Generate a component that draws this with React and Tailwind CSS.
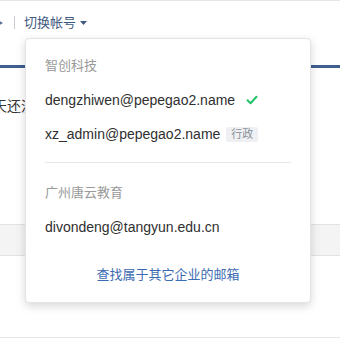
const FONT = '"Liberation Sans", "Noto Sans CJK SC", sans-serif'

const GROUPS = [
  {
    name: '智创科技',
    accounts: [
      { email: 'dengzhiwen@pepegao2.name', current: true },
      { email: 'xz_admin@pepegao2.name', tag: '行政' },
    ],
  },
  {
    name: '广州唐云教育',
    accounts: [{ email: 'divondeng@tangyun.edu.cn' }],
  },
]

function Check() {
  return (
    <svg width="12" height="10" viewBox="0 0 12 10" className="shrink-0">
      <path d="M1.5 5.2 L4.6 8.2 L10.5 1.8" fill="none" stroke="#22c36b" strokeWidth="2" strokeLinecap="round" strokeLinejoin="round" />
    </svg>
  )
}

export default function App() {
  return (
    <div className="relative w-[340px] h-[340px] overflow-hidden bg-white" style={{ fontFamily: FONT }}>
      <div className="border-t border-[#e6e6e6] h-[44px] flex items-center">
        <svg width="8" height="8" viewBox="0 0 8 8" className="shrink-0 ml-[-4px]">
          <path d="M2 1 L7 4 L2 7 Z" fill="#5c7193" />
        </svg>
        <span className="shrink-0 ml-[10px] w-[1px] h-[13px] bg-[#c8ccd3]" />
        <span className="shrink-0 ml-[9px] text-[#3f5a80] text-[13px] flex items-center gap-[4px]">
          切换帐号
          <svg width="7" height="4" viewBox="0 0 7 4">
            <path d="M0 0 H7 L3.5 4 Z" fill="#3f5a80" />
          </svg>
        </span>
      </div>

      <div className="mt-[21px] h-[3px] bg-[#3f5f8f]" />

      <div className="mt-[28px] ml-[-7px] text-[14px] text-[#333] leading-[20px] whitespace-nowrap">天还没有新的邮件</div>

      <div className="mt-[108px] h-[32px] bg-[#f4f4f4] border-y border-[#e3e3e3]" />

      <div className="mt-[81px] h-[1px] bg-[#e6e6e6]" />

      <div className="absolute left-[25px] top-[38px] w-[286px] h-[265px] bg-white rounded-[4px] border border-[#e4e4e4] shadow-[0_3px_10px_rgba(0,0,0,0.16)] pt-[10px] px-[19px]">
        {GROUPS.map((g, gi) => (
          <div key={g.name}>
            {gi > 0 && <div className="mt-[11px] mb-[13px] h-[1px] bg-[#e8e8e8]" />}
            <div className="h-[34px] flex items-center text-[13px] text-[#999]">{g.name}</div>
            {g.accounts.map((a) => (
              <div key={a.email} className="h-[34px] flex items-center text-[14px] text-[#2f2f2f]">
                <span>{a.email}</span>
                {a.current && (
                  <span className="ml-[11px] flex">
                    <Check />
                  </span>
                )}
                {a.tag && (
                  <span className="ml-[6px] h-[15px] px-[5px] rounded-[2px] bg-[#eef0f3] text-[#8a9099] text-[11px] leading-[15px]">
                    {a.tag}
                  </span>
                )}
              </div>
            ))}
          </div>
        ))}
        <div className="mt-[14px] h-[34px] flex items-center justify-center text-[13px] text-[#3b6bb1]">查找属于其它企业的邮箱</div>
      </div>
    </div>
  )
}
